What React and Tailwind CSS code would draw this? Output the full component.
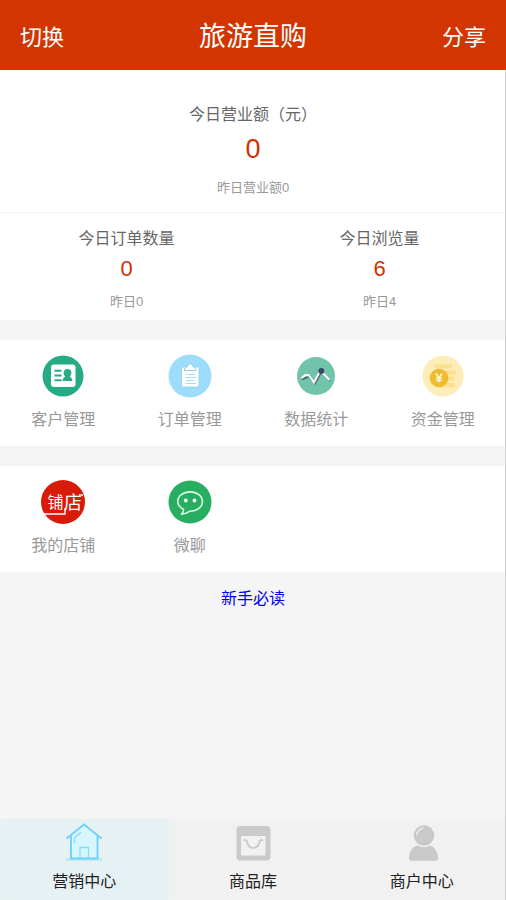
import React from 'react';

function CustomersIcon() {
  return (
    <svg viewBox="0 0 44 44" className="size-11" aria-hidden="true">
      <circle cx="22" cy="22" r="20.500" fill="#26ab87" />
      <rect x="10" y="10.500" width="24.500" height="22.500" rx="3" fill="#fff" />
      <path d="M13.500 16.800h7M13.500 21.500h7M13.500 26.200h7" stroke="#26ab87" strokeWidth="2" />
      <path d="M26.500 15a3.900 3.900 0 0 1 3.900 3.900c0 1.500-.7 2.600-1.600 3.300 0 1.300 2.600 1 2.600 4.800h-9.800c0-3.800 2.600-3.500 2.600-4.800-.9-.7-1.600-1.800-1.600-3.300A3.900 3.900 0 0 1 26.500 15z" fill="#26ab87" />
    </svg>
  );
}

function OrdersIcon() {
  return (
    <svg viewBox="0 0 44 44" className="size-11" aria-hidden="true">
      <circle cx="22" cy="22" r="21.500" fill="#9edcfb" />
      <rect x="13.500" y="13" width="17.500" height="20" rx="1.500" fill="#fcfeff" stroke="#86cbef" strokeWidth=".7" />
      <path d="M16.500 16.500v-2l3-2a2.700 2.700 0 0 1 5.400 0l3 2v2z" fill="#fff" stroke="#8fcdee" strokeWidth="1" />
      <path d="M18 20.500h8.500M17.500 23.500h10.500M18 26.500h8.500M17.500 29.500h10.500" stroke="#a6daf5" strokeWidth="1.100" />
    </svg>
  );
}

function StatisticsIcon() {
  return (
    <svg viewBox="0 0 44 44" className="size-11" aria-hidden="true">
      <circle cx="22" cy="22" r="19" fill="#70c4aa" />
      <path d="M8 25.500l6.500-3 6.500 7 6.500-12 8.500 9.500" fill="none" stroke="#4c5f68" strokeWidth="1.800" />
      <path d="M7.500 24l3.500-2.700 3.500-.3 5.500 7.500 6.500-12 9 9.500" fill="none" stroke="#fff" strokeWidth="2" />
      <circle cx="27.300" cy="17" r="3" fill="#3c4962" />
    </svg>
  );
}

function FundsIcon() {
  return (
    <svg viewBox="0 0 44 44" className="size-11" aria-hidden="true">
      <circle cx="22" cy="22" r="20.500" fill="#feedb9" />
      <path d="M14 12.500h17M18 18.500h17M22 24.500h11M18 31h16" stroke="#fbdf8e" strokeWidth="4" />
      <circle cx="18" cy="24" r="9.300" fill="#eebc30" />
      <path d="M14.800 19.500L18 23.500l3.200-4M18 23.500v5M15 24h6M15 26.400h6" fill="none" stroke="#fff6d8" strokeWidth="1.500" />
    </svg>
  );
}

function ShopIcon() {
  return (
    <svg viewBox="0 0 44 44" className="size-11" aria-hidden="true">
      <circle cx="22" cy="22" r="22" fill="#d81b08" />
      <text x="6.500" y="28" fontSize="16" fill="#fff">铺</text>
      <text x="23" y="28.500" fontSize="18" fill="#fff">店</text>
      <path d="M2.500 34H24v-6M38 15h4" fill="none" stroke="#fff" strokeWidth="1.300" />
    </svg>
  );
}

function ChatIcon() {
  return (
    <svg viewBox="0 0 44 44" className="size-11" aria-hidden="true">
      <circle cx="22" cy="22" r="21.500" fill="#27ae60" />
      <path d="M15.500 29.300C11.800 27.600 9.800 25 9.800 21.600c0-5.500 5.300-9.700 12.300-9.700s12.300 4.200 12.300 9.700S29 31.200 22 31.200c-2.800 1.900-5.400 2.900-8.600 3.100 1.500-1.400 2.200-2.900 2.100-5z" fill="none" stroke="#d9fbe6" strokeWidth="1.600" strokeLinejoin="round" />
      <circle cx="17.800" cy="20.500" r="1.900" fill="#effff5" />
      <circle cx="26.500" cy="20.500" r="1.900" fill="#effff5" />
    </svg>
  );
}

function HouseIcon() {
  return (
    <svg viewBox="0 0 40 40" className="size-10" aria-hidden="true">
      <path d="M7 14L20 2l13 12v22H7z" fill="#d6f7ff" />
      <path d="M2 36.500h36" stroke="#b5e6f7" strokeWidth="2.500" />
      <path d="M2.500 15.500L20 1.500l17.500 14M7 13v22.500h26.500V13" fill="none" stroke="#70d2f8" strokeWidth="1.900" />
      <path d="M16 35.500V24.500h8.500v11M10.500 20.500V15l6.500-6" fill="none" stroke="#8bdaf7" strokeWidth="1.300" />
    </svg>
  );
}

function GoodsIcon() {
  return (
    <svg viewBox="0 0 40 40" className="size-10" aria-hidden="true">
      <rect x="3.500" y="3" width="34" height="34.500" rx="4" fill="#cacaca" />
      <path d="M8 13h24.500v19.500H8z" fill="#f1f1f1" />
      <path d="M10.500 17c3 0 3.500.5 4 3 1.500 6.500 10 6.500 11.500 0 .5-2.500 1-3 4-3" fill="none" stroke="#cacaca" strokeWidth="1.800" />
    </svg>
  );
}

function MerchantIcon() {
  return (
    <svg viewBox="0 0 40 40" className="size-10" aria-hidden="true">
      <path d="M7 35c0-6 4-12 8.500-12.500h12c4.500.5 8.500 6.500 8.500 12.500 0 1.800-.8 2.800-2.500 2.800h-24C7.800 37.800 7 36.800 7 35z" fill="#c9c9c9" />
      <circle cx="22" cy="12.500" r="11.500" fill="#f1f1f1" />
      <circle cx="22" cy="12.500" r="10.200" fill="#c9c9c9" />
      <path d="M14.800 12.500a7.500 7.500 0 0 1 6.500-7.500" fill="none" stroke="#efefef" strokeWidth="1.300" />
    </svg>
  );
}

const manageItems = [
  { label: '客户管理', Icon: CustomersIcon },
  { label: '订单管理', Icon: OrdersIcon },
  { label: '数据统计', Icon: StatisticsIcon },
  { label: '资金管理', Icon: FundsIcon },
];

const shopItems = [
  { label: '我的店铺', Icon: ShopIcon },
  { label: '微聊', Icon: ChatIcon },
];

const tabs = [
  { label: '营销中心', Icon: HouseIcon, active: true },
  { label: '商品库', Icon: GoodsIcon },
  { label: '商户中心', Icon: MerchantIcon },
];

function ShortcutGrid({ items }) {
  return (
    <section className="mt-5 grid grid-cols-4 bg-white py-3.5">
      {items.map(({ label, Icon }) => (
        <a key={label} href="#" className="flex flex-col items-center gap-2.5 text-base leading-6 text-[#999]">
          <Icon />
          {label}
        </a>
      ))}
    </section>
  );
}

function Stat({ label, value, previous }) {
  return (
    <div className="flex flex-col items-center pt-3.5 pb-1.5">
      <h2 className="text-base leading-6 text-[#666]">{label}</h2>
      <p className="text-[22px] leading-9 text-[#d23100]">{value}</p>
      <p className="mt-[3px] text-[13px] leading-6 text-[#999]">{previous}</p>
    </div>
  );
}

export default function App() {
  return (
    <div className="flex min-h-screen flex-col bg-[#f5f5f5] font-['Liberation_Sans','Noto_Sans_CJK_SC',sans-serif]">
      <header className="flex h-[70px] items-center justify-between bg-[#d23500] px-5 pt-1 text-white">
        <button type="button" className="text-[22px]">切换</button>
        <h1 className="text-[27px]">旅游直购</h1>
        <button type="button" className="text-[22px]">分享</button>
      </header>

      <div className="relative flex grow flex-col">
        <main className="flex grow flex-col">
          <section className="bg-white">
            <div className="flex flex-col items-center border-b border-[#f5f5f5] pt-[33px] pb-3">
              <h2 className="text-base leading-6 text-[#666]">今日营业额（元）</h2>
              <p className="text-[27px] leading-11 text-[#d23100]">0</p>
              <p className="mt-[5px] text-[13px] leading-6 text-[#999]">昨日营业额0</p>
            </div>
            <div className="grid grid-cols-2">
              <Stat label="今日订单数量" value="0" previous="昨日0" />
              <Stat label="今日浏览量" value="6" previous="昨日4" />
            </div>
          </section>

          <ShortcutGrid items={manageItems} />
          <ShortcutGrid items={shopItems} />

          <a href="#" className="mt-[15px] self-center text-base leading-6 text-[#0000ee]">新手必读</a>
        </main>

        <nav className="grid grid-cols-3 bg-[#f1f1f1]">
          {tabs.map(({ label, Icon, active }) => (
            <a
              key={label}
              href="#"
              aria-current={active ? 'page' : undefined}
              className={`flex flex-col items-center gap-[7px] rounded pt-1 pb-1.5 text-base leading-6 text-[#222] ${active ? 'bg-[#e5f1f2]' : ''}`}
            >
              <Icon />
              {label}
            </a>
          ))}
        </nav>
        <div className="pointer-events-none absolute inset-y-0 right-0 w-px bg-[#cfcfcf]" />
      </div>
    </div>
  );
}
